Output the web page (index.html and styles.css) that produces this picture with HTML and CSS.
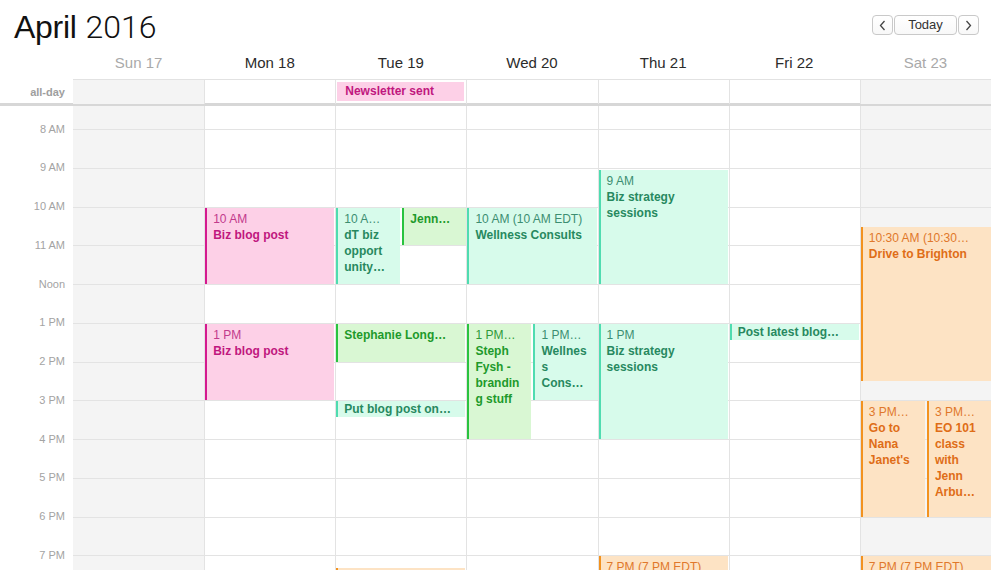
FILE: index.html
```html
<!DOCTYPE html>
<html>
<head>
<meta charset="utf-8">
<link rel="stylesheet" href="styles.css">
</head>
<body>
<div class="app">
  <header class="top">
    <h1 class="title"><span class="month">April</span> <span class="year">2016</span></h1>
    <nav class="nav">
      <button class="btn btn-arrow" aria-label="Previous"><svg width="7" height="11" viewBox="0 0 7 11"><polyline points="5.5,1 1.5,5.5 5.5,10" fill="none" stroke="#444" stroke-width="1.3"/></svg></button>
      <button class="btn btn-today">Today</button>
      <button class="btn btn-arrow" aria-label="Next"><svg width="7" height="11" viewBox="0 0 7 11"><polyline points="1.5,1 5.5,5.5 1.5,10" fill="none" stroke="#444" stroke-width="1.3"/></svg></button>
    </nav>
  </header>

  <div class="row heads">
    <div class="gutter"></div>
    <div class="dh muted">Sun 17</div>
    <div class="dh">Mon 18</div>
    <div class="dh">Tue 19</div>
    <div class="dh">Wed 20</div>
    <div class="dh">Thu 21</div>
    <div class="dh">Fri 22</div>
    <div class="dh muted">Sat 23</div>
  </div>

  <div class="row allday">
    <div class="gutter ad-label">all-day</div>
    <div class="adc weekend first"></div>
    <div class="adc"></div>
    <div class="adc"><div class="ad-ev pink">Newsletter sent</div></div>
    <div class="adc"></div>
    <div class="adc"></div>
    <div class="adc"></div>
    <div class="adc weekend"></div>
  </div>

  <div class="row grid">
    <div class="times">
      <div class="tl">8 AM</div>
      <div class="tl">9 AM</div>
      <div class="tl">10 AM</div>
      <div class="tl">11 AM</div>
      <div class="tl">Noon</div>
      <div class="tl">1 PM</div>
      <div class="tl">2 PM</div>
      <div class="tl">3 PM</div>
      <div class="tl">4 PM</div>
      <div class="tl">5 PM</div>
      <div class="tl">6 PM</div>
      <div class="tl">7 PM</div>
    </div>

    <!-- Sun -->
    <div class="day weekend first">
      <div class="pre"></div><div class="hr"></div><div class="hr"></div><div class="hr"></div><div class="hr"></div><div class="hr"></div><div class="hr"></div><div class="hr"></div><div class="hr"></div><div class="hr"></div><div class="hr"></div><div class="hr"></div><div class="hr"></div>
    </div>

    <!-- Mon -->
    <div class="day">
      <div class="pre"></div><div class="hr"></div><div class="hr"></div><div class="hr"></div><div class="hr"></div><div class="hr"></div><div class="hr"></div><div class="hr"></div><div class="hr"></div><div class="hr"></div><div class="hr"></div><div class="hr"></div><div class="hr"></div>
      <div class="ev pink" style="top:101.5px;height:76.5px"><div class="t">10 AM</div><div class="n">Biz blog post</div></div>
      <div class="ev pink" style="top:217.75px;height:76.5px"><div class="t">1 PM</div><div class="n">Biz blog post</div></div>
    </div>

    <!-- Tue -->
    <div class="day">
      <div class="pre"></div><div class="hr"></div><div class="hr"></div><div class="hr"></div><div class="hr"></div><div class="hr"></div><div class="hr"></div><div class="hr"></div><div class="hr"></div><div class="hr"></div><div class="hr"></div><div class="hr"></div><div class="hr"></div>
      <div class="ev teal half-l" style="top:101.5px;height:76.5px"><div class="t">10 A…</div><div class="n">dT biz</div><div class="n">opport</div><div class="n">unity…</div></div>
      <div class="ev green half-r" style="top:101.5px;height:37.75px"><div class="n">Jenn…</div></div>
      <div class="ev green" style="top:217.75px;height:37.75px"><div class="n">Stephanie Long…</div></div>
      <div class="ev teal short" style="top:295.25px;height:16px"><div class="n">Put blog post on…</div></div>
      <div class="ev orange" style="top:462px;height:60px"></div>
    </div>

    <!-- Wed -->
    <div class="day">
      <div class="pre"></div><div class="hr"></div><div class="hr"></div><div class="hr"></div><div class="hr"></div><div class="hr"></div><div class="hr"></div><div class="hr"></div><div class="hr"></div><div class="hr"></div><div class="hr"></div><div class="hr"></div><div class="hr"></div>
      <div class="ev teal" style="top:101.5px;height:76.5px"><div class="t">10 AM (10 AM EDT)</div><div class="n">Wellness Consults</div></div>
      <div class="ev green half-l" style="top:217.75px;height:115.25px"><div class="t">1 PM…</div><div class="n">Steph</div><div class="n">Fysh -</div><div class="n">brandin</div><div class="n">g stuff</div></div>
      <div class="ev teal half-r" style="top:217.75px;height:76.5px"><div class="t">1 PM…</div><div class="n">Wellnes</div><div class="n">s</div><div class="n">Cons…</div></div>
    </div>

    <!-- Thu -->
    <div class="day">
      <div class="pre"></div><div class="hr"></div><div class="hr"></div><div class="hr"></div><div class="hr"></div><div class="hr"></div><div class="hr"></div><div class="hr"></div><div class="hr"></div><div class="hr"></div><div class="hr"></div><div class="hr"></div><div class="hr"></div>
      <div class="ev teal" style="top:63.5px;height:114.5px"><div class="t">9 AM</div><div class="n">Biz strategy</div><div class="n">sessions</div></div>
      <div class="ev teal" style="top:217.75px;height:115.25px"><div class="t">1 PM</div><div class="n">Biz strategy</div><div class="n">sessions</div></div>
      <div class="ev orange" style="top:450.25px;height:76.5px"><div class="t">7 PM (7 PM EDT)</div></div>
    </div>

    <!-- Fri -->
    <div class="day">
      <div class="pre"></div><div class="hr"></div><div class="hr"></div><div class="hr"></div><div class="hr"></div><div class="hr"></div><div class="hr"></div><div class="hr"></div><div class="hr"></div><div class="hr"></div><div class="hr"></div><div class="hr"></div><div class="hr"></div>
      <div class="ev teal short" style="top:217.75px;height:16px"><div class="n">Post latest blog…</div></div>
    </div>

    <!-- Sat -->
    <div class="day weekend">
      <div class="pre"></div><div class="hr"></div><div class="hr"></div><div class="hr"></div><div class="hr"></div><div class="hr"></div><div class="hr"></div><div class="hr"></div><div class="hr"></div><div class="hr"></div><div class="hr"></div><div class="hr"></div><div class="hr"></div>
      <div class="ev orange edge" style="top:120.875px;height:154px"><div class="t">10:30 AM (10:30…</div><div class="n">Drive to Brighton</div></div>
      <div class="ev orange half-l" style="top:295.25px;height:115.25px"><div class="t">3 PM…</div><div class="n">Go to</div><div class="n">Nana</div><div class="n">Janet's</div></div>
      <div class="ev orange half-r" style="top:295.25px;height:115.25px"><div class="t">3 PM…</div><div class="n">EO 101</div><div class="n">class</div><div class="n">with</div><div class="n">Jenn</div><div class="n">Arbu…</div></div>
      <div class="ev orange edge" style="top:450.25px;height:76.5px"><div class="t">7 PM (7 PM EDT)</div></div>
    </div>
  </div>
</div>
</body>
</html>
```

FILE: styles.css
```css
html, body {
  margin: 0;
  padding: 0;
  height: 100%;
  overflow: hidden;
  background: #fff;
}

.app {
  font-family: "Liberation Sans", Arial, sans-serif;
  color: #333;
  height: 100vh;
  display: flex;
  flex-direction: column;
}

/* ---------- top header ---------- */
.top {
  display: flex;
  justify-content: space-between;
  align-items: flex-start;
  padding: 7px 12px 0 14px;
  height: 40px;
  flex: none;
}

.title {
  margin: 0;
  font-size: 32px;
  line-height: 40px;
  font-weight: normal;
  color: #111;
  white-space: nowrap;
}

.month {
  font-family: "Liberation Sans", Arial, sans-serif;
  font-weight: normal;
  letter-spacing: -0.3px;
}

.year {
  font-family: Roboto, "Liberation Sans", sans-serif;
  font-weight: 300;
}

.nav {
  display: flex;
  gap: 1px;
  margin-top: 8px;
}

.btn {
  box-sizing: border-box;
  height: 20px;
  border: 1px solid #c9c9c9;
  border-radius: 4px;
  background: linear-gradient(#ffffff, #f8f8f8);
  font-family: "Liberation Sans", Arial, sans-serif;
  font-size: 13px;
  color: #333;
  padding: 0;
  display: flex;
  align-items: center;
  justify-content: center;
}

.btn-arrow { width: 21px; }
.btn-today { width: 63px; line-height: 18px; }

/* ---------- shared row grid ---------- */
.row {
  display: grid;
  grid-template-columns: 73px repeat(7, 1fr);
}

/* day headings */
.heads {
  height: 33px;
  flex: none;
}

.dh {
  height: 32px;
  line-height: 32px;
  text-align: center;
  font-size: 15px;
  color: #2b2b2b;
  border-bottom: 1px solid #e2e2e2;
}

.dh.muted { color: #a9a9a9; }

/* all-day row */
.allday {
  height: 23px;
  flex: none;
  border-bottom: 3px solid #d7d7d7;
}

.ad-label {
  font-size: 11px;
  font-weight: bold;
  color: #9e9e9e;
  text-align: right;
  padding-right: 8px;
  line-height: 24px;
}

.adc {
  border-left: 1px solid #e3e3e3;
}

.adc.first { border-left: none; }

.weekend { background: #f4f4f4; }

.ad-ev {
  margin: 2px 2px 0 1px;
  height: 19px;
  line-height: 19px;
  padding-left: 8px;
  font-size: 12px;
  font-weight: bold;
  white-space: nowrap;
  overflow: hidden;
}

.ad-ev.pink { background: #fdd0e7; color: #c0177e; }

/* ---------- time grid ---------- */
.grid {
  flex: 1;
  overflow: hidden;
  min-height: 0;
}

.times {
  padding-top: 3.625px;
}

.tl {
  height: 38.75px;
  line-height: 38.75px;
  text-align: right;
  padding-right: 8px;
  font-size: 11px;
  color: #a3a3a3;
  white-space: nowrap;
}

.day {
  position: relative;
  border-left: 1px solid #e3e3e3;
  overflow: hidden;
}

.day.first { border-left: none; }

.pre { height: 23px; }

.hr {
  box-sizing: border-box;
  height: 38.75px;
  border-top: 1px solid #e3e3e3;
}

/* ---------- events ---------- */
.ev {
  position: absolute;
  left: 0;
  right: 1px;
  box-sizing: border-box;
  border-left: 2px solid;
  padding: 3px 2px 0 6px;
  font-size: 12px;
  line-height: 16px;
  overflow: hidden;
  white-space: nowrap;
}

.ev.edge { right: 0; }

.ev.half-l { right: auto; width: calc(50% - 1px); }
.ev.half-r { left: calc(50% + 1px); right: 0; }
.ev.short { padding-top: 0; }

.ev .t { font-weight: normal; }
.ev .n { font-weight: bold; }

.ev.pink   { background: #fdd0e7; border-color: #d4198f; color: #c0177e; }
.ev.pink .t { color: #c23a8c; }

.ev.teal   { background: #d7fbeb; border-color: #4fdcb0; color: #27895f; }
.ev.teal .t { color: #3c8e71; }

.ev.green  { background: #d9f7d3; border-color: #2ac33f; color: #1e9a2b; }
.ev.green .t { color: #2f9a3a; }

.ev.orange { background: #fde3c4; border-color: #f2921f; color: #df6d17; }
.ev.orange .t { color: #e0782b; }
```
